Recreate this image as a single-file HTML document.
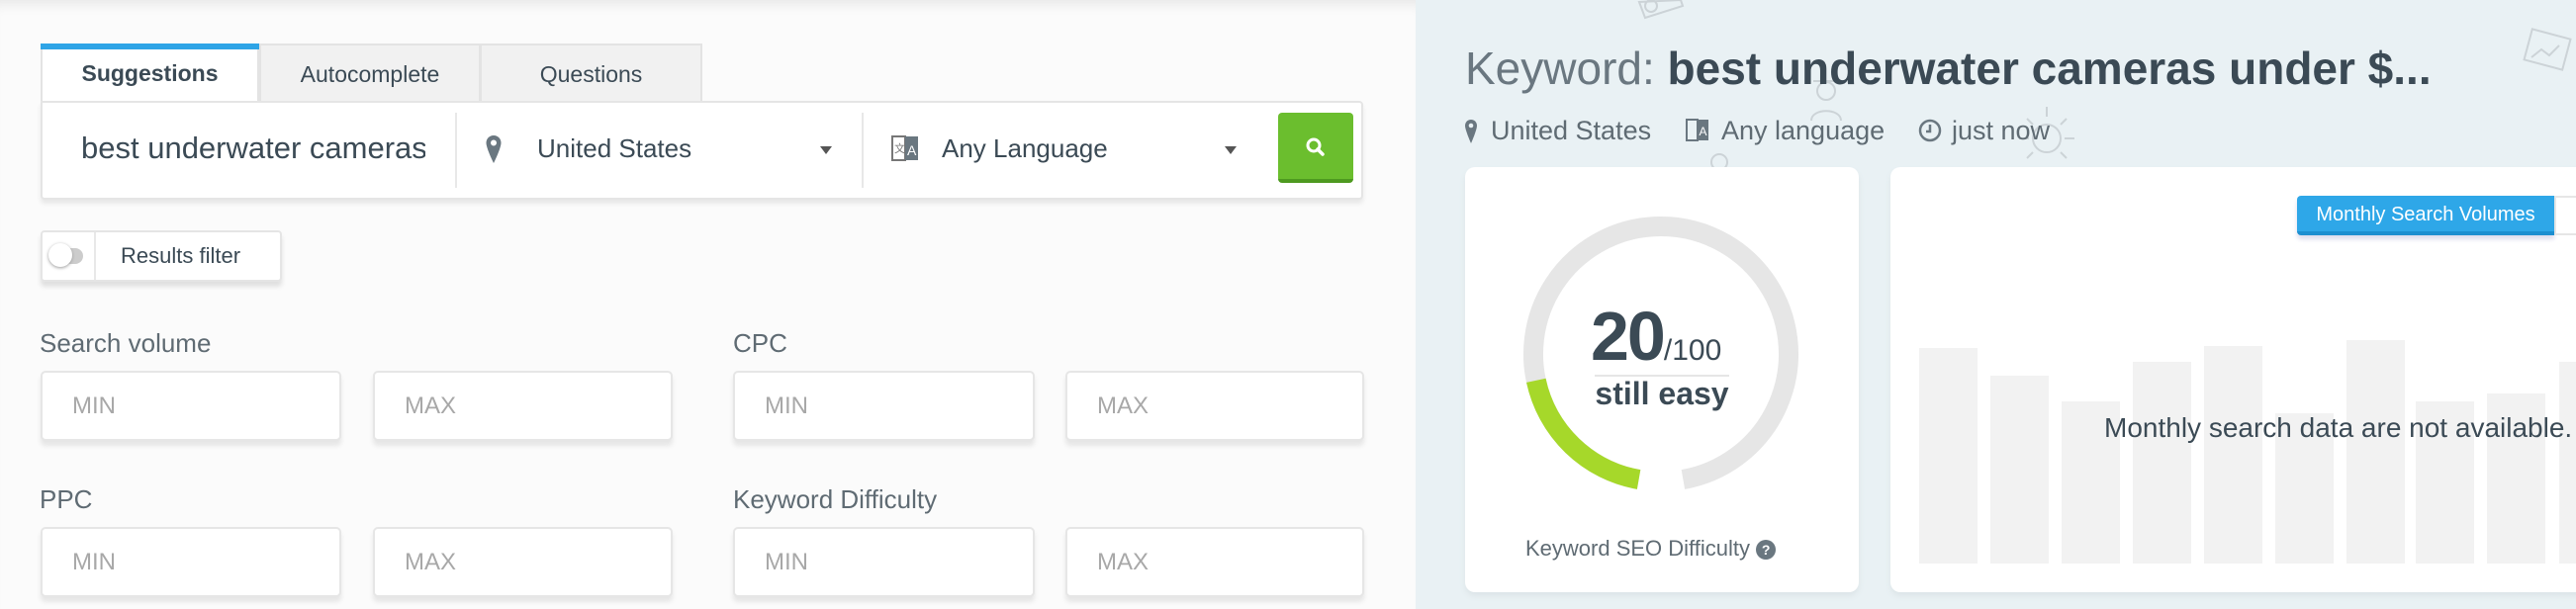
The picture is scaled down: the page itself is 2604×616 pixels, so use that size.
<!DOCTYPE html>
<html><head><meta charset="utf-8"><style>
*{box-sizing:border-box;margin:0;padding:0}
body{width:2604px;height:616px;overflow:hidden;position:relative;background:#fbfbfb;font-family:"Liberation Sans",sans-serif;color:#3b4a55}
.abs{position:absolute}
.left{left:0;top:0;width:1431px;height:616px;background:#fbfbfb;box-shadow:inset 0 14px 12px -10px #e6e6e6}
.tab{position:absolute;top:44px;height:60px;background:#f1f1f1;border:2px solid #e3e3e3;border-bottom:none;font-size:23px;color:#3b4a55;display:flex;align-items:center;justify-content:center}
.box{background:#fff;border:2px solid #e5e5e5;border-radius:4px;box-shadow:0 4px 4px #e8e8e8}
.inp{position:absolute;height:71px;background:#fff;border:2px solid #e6e6e6;border-radius:5px;box-shadow:0 5px 5px #e6e6e6;font-size:24px;color:#a8a8a8;padding-left:30px;line-height:67px}
.lbl{position:absolute;font-size:26px;color:#5f6b73}
.right{left:1431px;top:0;width:1173px;height:616px;background:#e9f1f4}
.card{background:#fff;border-radius:10px;box-shadow:0 4px 6px #dde5e8}
.bar{position:absolute;background:#f2f2f2;width:59px;bottom:46px}
</style></head><body>
<div class="abs left"></div>
<div class="tab" style="left:41px;width:221px;background:#fff;font-weight:bold;border-top:none"><div class="abs" style="left:-2px;right:-2px;top:0;height:6px;background:#2ea4e6"></div>Suggestions</div>
<div class="tab" style="left:262px;width:224px">Autocomplete</div>
<div class="tab" style="left:485px;width:225px">Questions</div>
<div class="abs box" style="left:41px;top:102px;width:1337px;height:100px;border-top-left-radius:0"></div>
<div class="abs" style="left:82px;top:132px;width:348px;overflow:hidden;white-space:nowrap;font-size:31px;color:#3b4a55">best underwater cameras</div>
<div class="abs" style="left:460px;top:114px;width:2px;height:76px;background:#e8e8e8"></div>
<div class="abs" style="left:871px;top:114px;width:2px;height:76px;background:#e8e8e8"></div>
<svg class="abs" style="left:490px;top:136px" width="18" height="30" viewBox="0 0 18 30"><path d="M9 1C4.5 1 1.5 4.5 1.5 8.5 1.5 14 9 29 9 29S16.5 14 16.5 8.5C16.5 4.5 13.5 1 9 1z" fill="#6a7780"/><circle cx="9" cy="8.5" r="3" fill="#fff"/></svg>
<div class="abs" style="left:543px;top:135px;font-size:26px;color:#3b4a55">United States</div>
<div class="abs" style="left:829px;top:148px;border:6px solid transparent;border-top:8px solid #555"></div>
<svg class="abs" style="left:900px;top:134px" width="30" height="34" viewBox="0 0 30 34"><rect x="2" y="4" width="13" height="24" fill="none" stroke="#777" stroke-width="2"/><rect x="15" y="4" width="13" height="24" fill="#6a7780"/><text x="17" y="23" font-size="14" fill="#fff" font-family="Liberation Sans">A</text><text x="4" y="20" font-size="11" fill="#777" font-family="Liberation Sans">文</text></svg>
<div class="abs" style="left:952px;top:135px;font-size:26px;color:#3b4a55">Any Language</div>
<div class="abs" style="left:1238px;top:148px;border:6px solid transparent;border-top:8px solid #555"></div>
<div class="abs" style="left:1292px;top:114px;width:76px;height:71px;background:#6bbe2e;border-radius:4px;border-bottom:4px solid #4e9a20"></div>
<svg class="abs" style="left:1319px;top:138px" width="22" height="22" viewBox="0 0 22 22"><circle cx="9" cy="9" r="6" fill="none" stroke="#fff" stroke-width="3"/><path d="M13 13l5 5" stroke="#fff" stroke-width="3.5" stroke-linecap="round"/></svg>
<div class="abs box" style="left:41px;top:233px;width:244px;height:52px;border-radius:4px;box-shadow:0 5px 5px #e0e0e0"></div>
<div class="abs" style="left:95px;top:235px;width:2px;height:48px;background:#e8e8e8"></div>
<div class="abs" style="left:52px;top:251px;width:32px;height:16px;border-radius:8px;background:#ccc"></div>
<div class="abs" style="left:49px;top:246px;width:24px;height:24px;border-radius:12px;background:#fff;box-shadow:0 1px 3px #999"></div>
<div class="abs" style="left:122px;top:246px;font-size:22px;color:#3b4a55">Results filter</div>
<div class="lbl" style="left:40px;top:332px">Search volume</div>
<div class="lbl" style="left:741px;top:332px">CPC</div>
<div class="lbl" style="left:40px;top:490px">PPC</div>
<div class="lbl" style="left:741px;top:490px">Keyword Difficulty</div>
<div class="inp" style="left:41px;top:375px;width:304px">MIN</div>
<div class="inp" style="left:377px;top:375px;width:303px">MAX</div>
<div class="inp" style="left:741px;top:375px;width:305px">MIN</div>
<div class="inp" style="left:1077px;top:375px;width:302px">MAX</div>
<div class="inp" style="left:41px;top:533px;width:304px">MIN</div>
<div class="inp" style="left:377px;top:533px;width:303px">MAX</div>
<div class="inp" style="left:741px;top:533px;width:305px">MIN</div>
<div class="inp" style="left:1077px;top:533px;width:302px">MAX</div>
<div class="abs right"></div>
<svg class="abs" style="left:1431px;top:0" width="1173" height="616" viewBox="0 0 1173 616" fill="none" stroke="#ccd3d7" stroke-width="2">
<path d="M226 2l42-2 2 6-38 12z"/><circle cx="238" cy="6" r="6"/>
<rect x="1124" y="34" width="40" height="32" transform="rotate(15 1144 50)"/><path d="M1128 58l10-8 8 6 10-10"/>
<circle cx="415" cy="92" r="9"/><path d="M402 82h26M400 122c0-13 30-13 30 0"/>
<circle cx="638" cy="140" r="14"/><path d="M638 108v10M610 140h10M666 140h-10M618 120l6 6M658 120l-6 6M618 160l6-6M658 160l-6-6"/>
<circle cx="307" cy="164" r="8"/>
</svg>
<div class="abs" style="left:1481px;top:42px;font-size:46px;color:#6a7780;white-space:nowrap">Keyword: <b style="color:#3b4a55">best underwater cameras under $...</b></div>
<svg class="abs" style="left:1480px;top:120px" width="14" height="26" viewBox="0 0 14 26"><path d="M7 1C3.5 1 1 3.8 1 7c0 4.5 6 18 6 18s6-13.5 6-18C13 3.8 10.5 1 7 1z" fill="#6a7780"/><circle cx="7" cy="7" r="2.3" fill="#e9f1f4"/></svg>
<div class="abs" style="left:1507px;top:117px;font-size:27px;color:#5f6b73">United States</div>
<svg class="abs" style="left:1703px;top:118px" width="26" height="30" viewBox="0 0 26 30"><rect x="2" y="3" width="11" height="21" fill="none" stroke="#6a7780" stroke-width="2"/><rect x="13" y="3" width="11" height="21" fill="#6a7780"/><text x="14.5" y="19" font-size="12" fill="#fff" font-family="Liberation Sans">A</text></svg>
<div class="abs" style="left:1740px;top:117px;font-size:27px;color:#5f6b73">Any language</div>
<svg class="abs" style="left:1939px;top:120px" width="24" height="24" viewBox="0 0 24 24"><circle cx="12" cy="12" r="10" fill="none" stroke="#6a7780" stroke-width="2.5"/><path d="M12 6v7h-4" fill="none" stroke="#6a7780" stroke-width="2.5"/></svg>
<div class="abs" style="left:1973px;top:117px;font-size:27px;color:#5f6b73">just now</div>
<div class="abs card" style="left:1481px;top:169px;width:398px;height:430px"></div>
<svg class="abs" style="left:1481px;top:169px" width="398" height="430" viewBox="0 0 398 430">
<g transform="translate(198 189)">
<path d="M -22.4 127.0 A 129 129 0 1 1 22.4 127.0" fill="none" stroke="#e6e6e6" stroke-width="20"/>
<path d="M -22.4 127.0 A 129 129 0 0 1 -126.2 26.8" fill="none" stroke="#a6d82a" stroke-width="20"/>
</g>
<line x1="131" y1="211" x2="267" y2="211" stroke="#e6e6e6" stroke-width="2"/>
</svg>
<div class="abs" style="left:1608px;top:300px;white-space:nowrap;color:#3b4a55"><span style="font-size:70px;font-weight:bold;letter-spacing:-2px">20</span><span style="font-size:30px">/100</span></div>
<div class="abs" style="left:1580px;top:380px;width:200px;text-align:center;font-size:32px;font-weight:bold;color:#3b4a55;white-space:nowrap">still easy</div>
<div class="abs" style="left:1542px;top:542px;font-size:22px;color:#5f6b73;white-space:nowrap">Keyword SEO Difficulty <span style="display:inline-block;width:20px;height:20px;border-radius:10px;background:#6a7780;color:#fff;font-size:14px;font-weight:bold;text-align:center;line-height:20px;vertical-align:1px">?</span></div>
<div class="abs card" style="left:1911px;top:169px;width:720px;height:430px"></div>
<div class="bar" style="left:1940px;top:352px"></div>
<div class="bar" style="left:2012px;top:380px"></div>
<div class="bar" style="left:2084px;top:406px"></div>
<div class="bar" style="left:2156px;top:366px"></div>
<div class="bar" style="left:2228px;top:350px"></div>
<div class="bar" style="left:2300px;top:418px"></div>
<div class="bar" style="left:2372px;top:344px"></div>
<div class="bar" style="left:2442px;top:406px"></div>
<div class="bar" style="left:2514px;top:398px"></div>
<div class="bar" style="left:2587px;top:366px"></div>
<div class="abs" style="left:2127px;top:417px;font-size:28px;color:#3b4a55;white-space:nowrap">Monthly search data are not available.</div>
<div class="abs" style="left:2322px;top:198px;width:260px;height:40px;background:#2ea7e8;border-bottom:4px solid #1d8fd0;border-radius:4px 0 0 4px;color:#fff;font-size:20px;text-align:center;line-height:38px;box-shadow:0 4px 5px #dde">Monthly Search Volumes</div>
<div class="abs" style="left:2582px;top:198px;width:30px;height:40px;background:#fff;border:2px solid #e6e6e6"></div>
</body></html>
